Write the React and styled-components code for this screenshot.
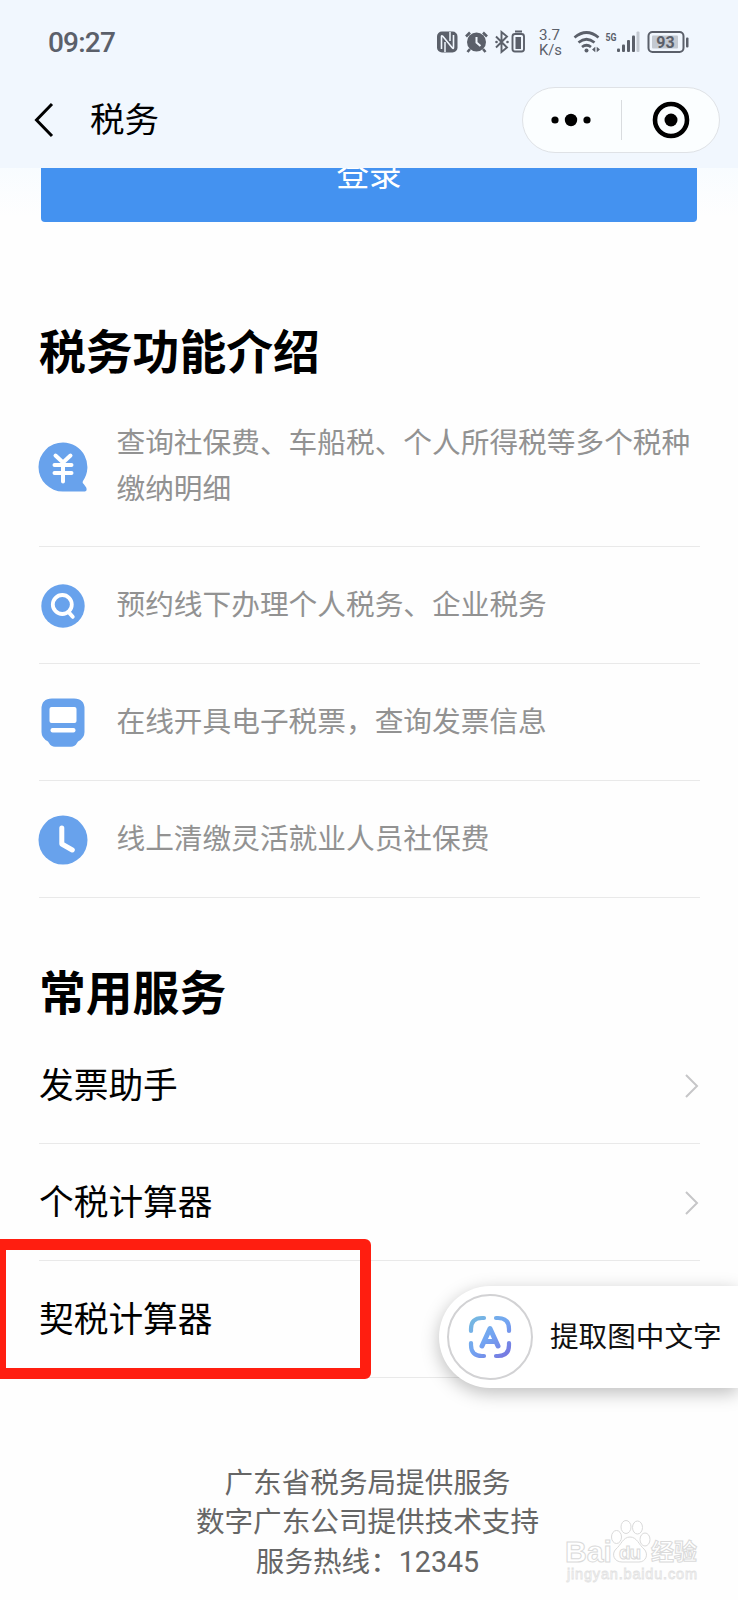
import React from 'react';
import styled, { createGlobalStyle } from 'styled-components';

const colors = {
  header: '#f1f7fe',
  primary: '#4492f0',
  icon: '#68a2ec',
  status: '#5b606a',
  divider: '#e9e9e9',
  mark: '#ff1e10',
};

const GlobalStyle = createGlobalStyle`
  * {
    box-sizing: border-box;
  }

  body {
    background: #fefefe;
    color: #000;
    font-family: Roboto, 'Noto Sans CJK SC', sans-serif;
    margin: 0;
  }

  svg {
    display: block;
  }
`;

const Page = styled.div`
  height: 1600px;
  overflow: hidden;
  position: relative;
  width: 738px;
`;

const Header = styled.header`
  background: ${colors.header};
  height: 168px;
`;

const StatusBar = styled.div`
  align-items: center;
  color: ${colors.status};
  display: flex;
  height: 84px;
  justify-content: space-between;
  padding: 0 48px;
`;

const Time = styled.span`
  font-size: 28px;
  font-weight: 500;
  letter-spacing: -0.8px;
`;

const NavBar = styled.div`
  align-items: center;
  display: flex;
  height: 71px;
  padding: 0 18px 0 34px;
`;

const Title = styled.h1`
  flex: 1;
  font-size: 34.5px;
  font-weight: 400;
  line-height: 50px;
  margin: 0 0 0 36px;
`;

const Capsule = styled.div`
  align-items: center;
  background: #fbfeff;
  border: 1px solid #dfe2e6;
  border-radius: 33px;
  display: flex;
  height: 66px;
  width: 198px;
`;

const CapsuleButton = styled.button`
  align-items: center;
  background: none;
  border: 0;
  display: flex;
  flex: 1;
  height: 40px;
  justify-content: center;
  padding: 0 2px 0 0;

  & + & {
    border-left: 1px solid #d9dcdf;
    padding: 0 0 0 2px;
  }
`;

const LoginArea = styled.div`
  background: linear-gradient(#f8fcff, #fefefe 48px);
  height: 54px;
  overflow: hidden;
  padding: 0 41px;
`;

// Scrolled half way under the header
const LoginButton = styled.button`
  background: ${colors.primary};
  border: 0;
  border-radius: 4px;
  color: #fff;
  display: block;
  font-family: inherit;
  font-size: 32.5px;
  height: 94px;
  line-height: 94px;
  margin-top: -40px;
  padding: 0;
  width: 100%;
`;

const Content = styled.main`
  padding: 98px 38px 0 39px;
`;

const Heading = styled.h2`
  font-size: 46.8px;
  font-weight: 700;
  line-height: 66px;
  margin: 0;
`;

const List = styled.ul`
  list-style: none;
  margin: 0;
  padding: 0;

  & + ${Heading} {
    margin-top: 63px;
  }
`;

const Feature = styled.li`
  align-items: center;
  border-bottom: 1px solid ${colors.divider};
  color: #929292;
  display: flex;
  font-size: 28.7px;
  line-height: 46px;
  padding: 35px 0;

  &:first-child {
    padding: 34px 0;
  }
`;

const FeatureIcon = styled.svg`
  flex: none;
  height: 50px;
  margin: -1px 28.5px -3px -1px;
  width: 50px;
`;

const Service = styled.li`
  align-items: center;
  border-bottom: 1px solid ${colors.divider};
  display: flex;
  font-size: 34.7px;
  height: 117px;
  justify-content: space-between;
`;

const ServiceName = styled.span`
  padding-bottom: 5px;
`;

const Footer = styled.footer`
  color: #666;
  font-size: 28.6px;
  line-height: 39.3px;
  margin-top: 86px;
  padding-right: 3px;
  text-align: center;
`;

const Highlight = styled.div`
  border: 11px solid ${colors.mark};
  border-radius: 6px;
  height: 140px;
  left: -5px;
  position: absolute;
  top: 1239px;
  width: 376px;
`;

const ExtractButton = styled.button`
  align-items: center;
  background: #fff;
  border: 0;
  border-radius: 51px 0 0 51px;
  box-shadow: 0 5px 18px rgba(0, 0, 0, .26);
  color: #111;
  display: flex;
  font-family: inherit;
  font-size: 28.6px;
  height: 102px;
  padding: 0 0 0 8px;
  position: absolute;
  right: 0;
  top: 1286px;
  white-space: nowrap;
  width: 299px;
`;

const ExtractLabel = styled.span`
  padding-bottom: 5px;
`;

const ExtractIcon = styled.span`
  align-items: center;
  border: 2px solid #d2d2d4;
  border-radius: 50%;
  display: flex;
  flex: none;
  height: 86px;
  justify-content: center;
  margin-right: 17px;
  width: 86px;
`;

const Watermark = styled.svg`
  left: 560px;
  position: absolute;
  top: 1516px;
`;

const StatusIcons = () => (
  <svg width="256" height="36" viewBox="434 24 256 36" fill={colors.status}>
    {/* nfc */}
    <rect x="437" y="31.500" width="20.500" height="21" rx="5" />
    <path d="M441.500 49V36.500q0-1.500 1.300-.2l9.400 11.400q1.300 1.500 1.300-.2V35" fill="none" stroke={colors.header} strokeWidth="1.600" />
    <path d="M445 42v10M450 32v9" fill="none" stroke={colors.header} strokeWidth="1.500" />
    {/* alarm */}
    <circle cx="476.500" cy="42" r="9.500" />
    <path d="M466 36.500l4-4M487 36.500l-4-4M470 49l-2.500 3M483 49l2.500 3" stroke={colors.status} strokeWidth="2.600" />
    <path d="M476.500 37v5.500l4 3.500" fill="none" stroke={colors.header} strokeWidth="2" />
    {/* bluetooth */}
    <path d="M496 36.500l11 11-5.500 4.500V32l5.500 4.500-11 11" fill="none" stroke={colors.status} strokeWidth="1.900" />
    <circle cx="496.500" cy="42" r="1.300" />
    <circle cx="507.500" cy="42" r="1.300" />
    {/* device battery */}
    <rect x="515" y="30.500" width="7" height="2" />
    <rect x="512.500" y="34" width="11.500" height="17.500" rx="2.500" fill="none" stroke={colors.status} strokeWidth="1.900" />
    <rect x="515.500" y="37" width="5.500" height="12" />
    <text x="539" y="39.500" fontSize="15.500" textLength="21" lengthAdjust="spacingAndGlyphs">3.7</text>
    <text x="539" y="54.500" fontSize="15.500" textLength="23" lengthAdjust="spacingAndGlyphs">K/s</text>
    {/* wifi */}
    <g fill="none" stroke={colors.status} strokeWidth="2.700">
      <path d="M574.500 37.500q12-10 24 0" />
      <path d="M578.500 42.500q8-6.500 16 0" />
      <path d="M582 47q4.500-3.500 9 0" />
    </g>
    <circle cx="586.500" cy="50.500" r="2" />
    <path d="M592 49.500l3.300-2.700v5.400zM600 49.500l-3.300-2.700v5.400z" />
    {/* signal */}
    <text x="605.500" y="40.500" fontSize="11.500" fontWeight="700" textLength="11" lengthAdjust="spacingAndGlyphs">5G</text>
    <rect x="617" y="48.500" width="3" height="3.500" rx="1" />
    <rect x="622" y="44.500" width="3" height="7.500" rx="1" />
    <rect x="627" y="40" width="3" height="12" rx="1" />
    <rect x="632" y="35.500" width="3" height="16.500" rx="1" />
    <rect x="636.500" y="31.500" width="3" height="20.500" rx="1" opacity=".3" />
    {/* battery */}
    <rect x="648.500" y="32" width="35" height="20" rx="4" fill="none" stroke={colors.status} strokeWidth="2" />
    <rect x="652" y="35.500" width="26" height="13" rx="1" opacity=".3" />
    <text x="665.500" y="47.500" fontSize="16" fontWeight="700" textAnchor="middle">93</text>
    <rect x="686" y="37.500" width="2.500" height="10" rx="1" />
  </svg>
);

const YuanIcon = () => (
  <FeatureIcon viewBox="0 0 50 50">
    <path d="M25 .5a24.500 24.500 0 0 1 20 38.500q-1 2 .7 3l2.500 3.500q1.500 4-2.500 4H25a24.500 24.500 0 0 1 0-49z" fill={colors.icon} />
    <path d="M17.500 13.500l7.500 7 7.500-7M16.500 23h17M16.500 31h17M25 21v18.500" fill="none" stroke="#fff" strokeWidth="4" strokeLinecap="round" />
  </FeatureIcon>
);

const SearchIcon = () => (
  <FeatureIcon viewBox="0 0 50 50">
    <circle cx="25" cy="25" r="21.700" fill={colors.icon} />
    <circle cx="24.300" cy="23.500" r="9.500" fill="none" stroke="#fff" strokeWidth="3.800" />
    <path d="M30.500 31l4.200 4.800" stroke="#fff" strokeWidth="4" strokeLinecap="round" />
  </FeatureIcon>
);

const InvoiceIcon = () => (
  <FeatureIcon viewBox="0 0 50 50">
    <path d="M14 .5h22q10.500 0 10.500 10.500v23q0 6-6.500 9.500l-1 1.500q-2 3.800-6 3.800H17q-4 0-6-3.800L10 43.500Q3.500 40 3.500 34V11Q3.500.500 14 .5z" fill={colors.icon} />
    <rect x="11.500" y="9" width="27" height="16" rx="2" fill="#fff" />
    <rect x="12.500" y="30" width="25" height="4.500" rx="2" fill="#fff" />
  </FeatureIcon>
);

const ClockIcon = () => (
  <FeatureIcon viewBox="0 0 50 50">
    <circle cx="25" cy="25" r="24.500" fill={colors.icon} />
    <path d="M23.800 13v16l10.500 6" fill="none" stroke="#fff" strokeWidth="5" strokeLinecap="round" strokeLinejoin="round" />
  </FeatureIcon>
);

const Chevron = () => (
  <svg width="16" height="26" viewBox="0 0 16 26">
    <path d="M2 3l11 11L2 25" fill="none" stroke="#c6c6c8" strokeWidth="2" />
  </svg>
);

const ScanIcon = () => (
  <svg width="44" height="44" viewBox="0 0 44 44">
    <defs>
      <linearGradient id="scan" gradientUnits="userSpaceOnUse" x1="4" y1="2" x2="38" y2="42">
        <stop offset="0" stopColor="#76b9df" />
        <stop offset=".5" stopColor="#73a5f2" />
        <stop offset="1" stopColor="#7677e0" />
      </linearGradient>
    </defs>
    <g fill="none" stroke="url(#scan)" strokeWidth="4.200" strokeLinecap="round" strokeLinejoin="round">
      <path d="M3 16v-2Q3 3 14 3h2M28 3h2q11 0 11 11v2M41 28v2q0 11-11 11h-2M16 41h-2Q3 41 3 30v-2" />
      <path d="M14 31l8-17.500L30 31M17.500 26.500h9" strokeWidth="5" />
    </g>
  </svg>
);

const features = [
  { Icon: YuanIcon, text: '查询社保费、车船税、个人所得税等多个税种缴纳明细' },
  { Icon: SearchIcon, text: '预约线下办理个人税务、企业税务' },
  { Icon: InvoiceIcon, text: '在线开具电子税票，查询发票信息' },
  { Icon: ClockIcon, text: '线上清缴灵活就业人员社保费' },
];

const services = ['发票助手', '个税计算器', '契税计算器'];

export default function App() {
  return (
    <Page>
      <GlobalStyle />
      <Header>
        <StatusBar>
          <Time>09:27</Time>
          <StatusIcons />
        </StatusBar>
        <NavBar>
          <svg width="20" height="36" viewBox="0 0 20 36">
            <path d="M18 2L2.500 18 18 34" fill="none" stroke="#000" strokeWidth="3" />
          </svg>
          <Title>税务</Title>
          <Capsule>
            <CapsuleButton>
              <svg width="40" height="14" viewBox="0 0 40 14">
                <circle cx="4" cy="7" r="3.600" />
                <circle cx="20" cy="7" r="6.200" />
                <circle cx="36" cy="7" r="3.600" />
              </svg>
            </CapsuleButton>
            <CapsuleButton>
              <svg width="38" height="38" viewBox="0 0 38 38">
                <circle cx="19" cy="19" r="16" fill="none" stroke="#000" strokeWidth="4.600" />
                <circle cx="19" cy="19" r="6.500" />
              </svg>
            </CapsuleButton>
          </Capsule>
        </NavBar>
      </Header>
      <LoginArea>
        <LoginButton>登录</LoginButton>
      </LoginArea>
      <Content>
        <Heading>税务功能介绍</Heading>
        <List>
          {features.map(({ Icon, text }) => (
            <Feature key={text}>
              <Icon />
              <span>{text}</span>
            </Feature>
          ))}
        </List>
        <Heading>常用服务</Heading>
        <List>
          {services.map((name) => (
            <Service key={name}>
              <ServiceName>{name}</ServiceName>
              <Chevron />
            </Service>
          ))}
        </List>
      </Content>
      <Footer>
        <div>广东省税务局提供服务</div>
        <div>数字广东公司提供技术支持</div>
        <div>服务热线：12345</div>
      </Footer>
      <Highlight />
      <ExtractButton>
        <ExtractIcon><ScanIcon /></ExtractIcon>
        <ExtractLabel>提取图中文字</ExtractLabel>
      </ExtractButton>
      <Watermark width="145" height="76" viewBox="560 1516 145 76">
        <g fill="#fff" stroke="#dadada" strokeWidth="1">
          <ellipse cx="616.500" cy="1537" rx="5" ry="6.500" />
          <ellipse cx="626" cy="1527" rx="5" ry="6.500" />
          <ellipse cx="637.500" cy="1527.500" rx="5" ry="6.500" />
          <ellipse cx="645" cy="1539.500" rx="5" ry="6.500" />
          <path d="M630 1537c7 0 9 8 14 12 5 5 2 13-5 13h-17c-8 0-11-8-6-13 5-4 7-12 14-12z" />
          <text x="565" y="1561.500" fontSize="30" fontWeight="700" textLength="47" lengthAdjust="spacingAndGlyphs" fontFamily="Liberation Sans, sans-serif">Bai</text>
          <text x="619" y="1559" fontSize="19" fontWeight="700" textLength="22" fontFamily="Liberation Sans, sans-serif">du</text>
          <text x="651" y="1560" fontSize="23" fontWeight="700" textLength="46">经验</text>
        </g>
        <text x="567" y="1579" fontSize="14.500" fill="#fff" stroke="#e2e2e2" strokeWidth=".8" textLength="130" fontFamily="Liberation Sans, sans-serif">jingyan.baidu.com</text>
      </Watermark>
    </Page>
  );
}
